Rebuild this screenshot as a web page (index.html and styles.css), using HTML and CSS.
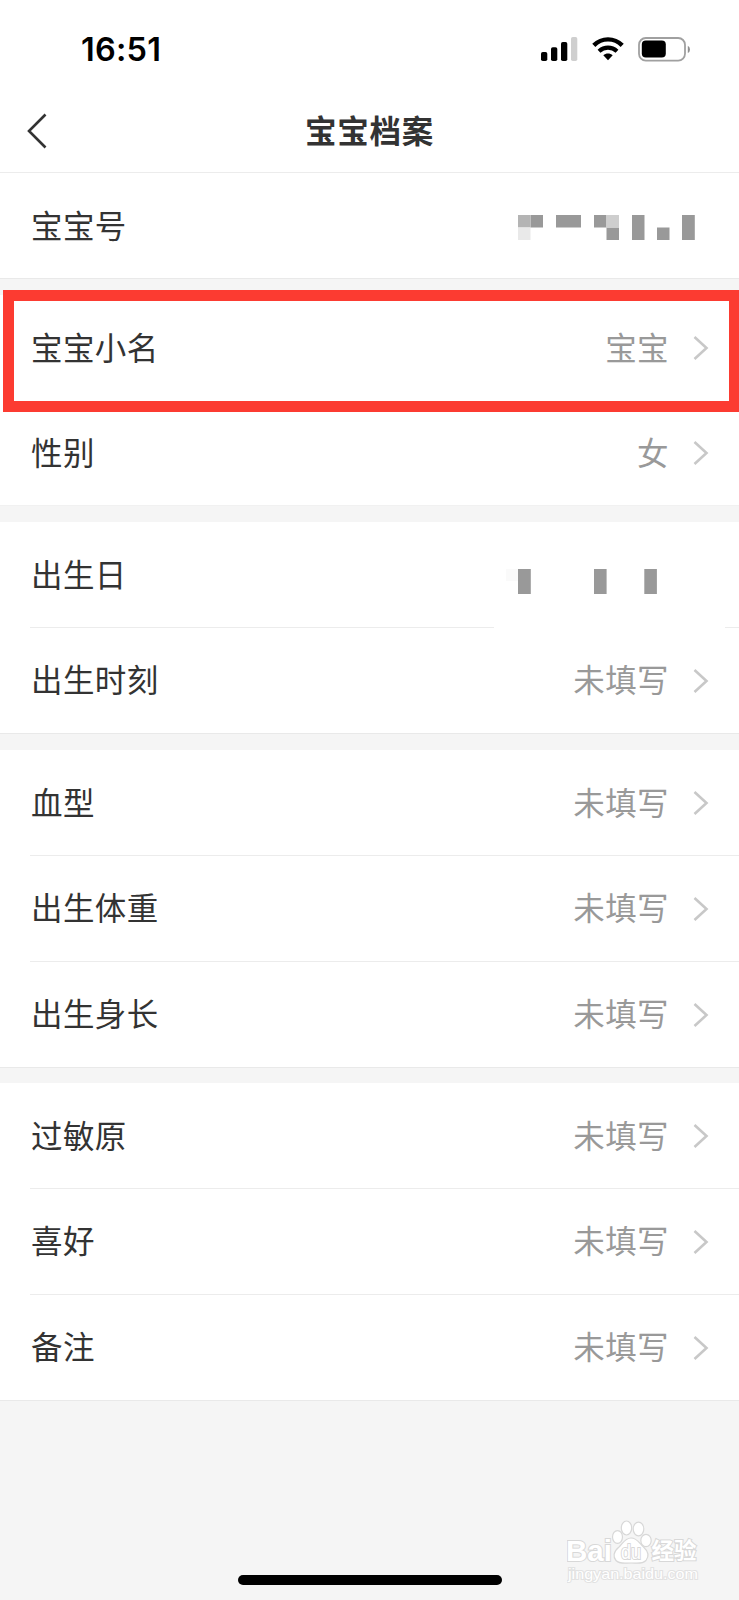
FILE: index.html
```
<!DOCTYPE html>
<html lang="zh-CN">
<head>
<meta charset="utf-8">
<title>宝宝档案</title>
<link rel="stylesheet" href="styles.css">
</head>
<body>
<svg class="defs" width="0" height="0" aria-hidden="true">
  <symbol id="chevron" viewBox="0 0 16 26"><path d="M1.500 2 L13.500 13 L1.500 24" fill="none" stroke="#c8c8c8" stroke-width="2.6"/></symbol>
</svg>
<div class="phone">
  <header class="status">
    <span class="time">16:51</span>
    <div class="status-icons">
      <svg width="37" height="25" viewBox="0 0 37 25">
        <rect x="0" y="15" width="6.3" height="9" rx="1.8"/>
        <rect x="10" y="10.3" width="6.3" height="13.7" rx="1.8"/>
        <rect x="20" y="5" width="6.3" height="19" rx="1.8"/>
        <rect x="30" y="0" width="6.3" height="24" rx="1.8" fill="#cfcfcf"/>
      </svg>
      <svg class="wifi" width="32" height="24" viewBox="0 0 32 24">
        <path d="M1.8 8.4 C9.8 0.4 22.2 0.4 30.2 8.4" fill="none" stroke="#000" stroke-width="4.4"/>
        <path d="M7 14.2 C12.3 9.4 19.7 9.4 25 14.2" fill="none" stroke="#000" stroke-width="4.2"/>
        <path d="M11.3 18.3 C14 15.9 18 15.9 20.7 18.3 L16 23.3 Z"/>
      </svg>
      <svg class="battery" width="53" height="25" viewBox="0 0 53 25">
        <rect x="1" y="1" width="46" height="22.6" rx="6.8" fill="#fff" stroke="#a0a0a0" stroke-width="1.8"/>
        <rect x="3.8" y="3.6" width="24" height="17" rx="4"/>
        <path d="M49.8 8.8 Q52 10 52 12.4 Q52 14.8 49.8 16 Z" fill="#8f8f8f"/>
      </svg>
    </div>
  </header>
  <nav class="nav">
    <svg class="back" width="20" height="36" viewBox="0 0 20 36"><path d="M18.5 1.5 L2 18 L18.5 34.5" fill="none" stroke="#333" stroke-width="2.6"/></svg>
    <h1 class="title">宝宝档案</h1>
  </nav>

  <section class="group g1">
    <div class="row"><span class="label">宝宝号</span>
      <svg class="mosaic-id" width="178" height="25" viewBox="0 0 178 25">
        <g fill="#999"><rect x="12.5" width="12.5" height="12.5"/><rect x="38" width="25" height="12.5"/><rect x="76" width="12.5" height="12.5"/><rect x="88.5" y="12.5" width="12.5" height="12.5"/><rect x="114" width="12.5" height="25"/><rect x="139" y="12.5" width="12.5" height="12.5"/><rect x="164" width="12.8" height="25"/></g>
        <rect width="12.5" height="12.5" fill="#b4b4b4"/><rect y="12.5" width="12.5" height="12.5" fill="#e9e9e9"/><rect x="88.5" width="12.5" height="12.5" fill="#cecece"/>
      </svg>
    </div>
  </section>

  <section class="group g2">
    <div class="row"><span class="label">宝宝小名</span><span class="value">宝宝</span><svg class="chev"><use href="#chevron"/></svg></div>
    <div class="row plain"><span class="label">性别</span><span class="value">女</span><svg class="chev"><use href="#chevron"/></svg></div>
    <div class="highlight"></div>
  </section>

  <section class="group g3">
    <div class="row"><span class="label">出生日</span>
      <svg class="mosaic-date" width="152" height="25" viewBox="0 0 152 25"><rect width="12" height="12" fill="#fafafa"/><g fill="#999"><rect x="12" width="12.8" height="25"/><rect x="88" width="12.6" height="25"/><rect x="138.3" width="12.6" height="25"/></g></svg>
    </div>
    <div class="row masked"><span class="label">出生时刻</span><span class="value">未填写</span><svg class="chev"><use href="#chevron"/></svg></div>
  </section>

  <section class="group g4">
    <div class="row"><span class="label">血型</span><span class="value">未填写</span><svg class="chev"><use href="#chevron"/></svg></div>
    <div class="row"><span class="label">出生体重</span><span class="value">未填写</span><svg class="chev"><use href="#chevron"/></svg></div>
    <div class="row"><span class="label">出生身长</span><span class="value">未填写</span><svg class="chev"><use href="#chevron"/></svg></div>
  </section>

  <section class="group g5">
    <div class="row"><span class="label">过敏原</span><span class="value">未填写</span><svg class="chev"><use href="#chevron"/></svg></div>
    <div class="row"><span class="label">喜好</span><span class="value">未填写</span><svg class="chev"><use href="#chevron"/></svg></div>
    <div class="row"><span class="label">备注</span><span class="value">未填写</span><svg class="chev"><use href="#chevron"/></svg></div>
  </section>

  <footer class="footer">
    <div class="home"></div>
    <svg class="watermark" width="140" height="72" viewBox="0 0 140 72">
      <text class="wm-latin" x="-1" y="46" textLength="46" lengthAdjust="spacingAndGlyphs">Bai</text>
      <g fill="#fff" stroke="#d8d8d8" stroke-width="1.2">
        <ellipse cx="50.5" cy="22" rx="5" ry="6.4"/>
        <ellipse cx="59.5" cy="13" rx="5.2" ry="7"/>
        <ellipse cx="71.5" cy="14" rx="5.3" ry="6.8"/>
        <ellipse cx="79" cy="25.500" rx="5.2" ry="6.2"/>
        <path d="M64 23 C58 23 56 28 52 32 C46 37 46 42 49 45.500 C52.500 49.500 58 48 64 48 C70 48 75 49.500 79 45.500 C82 41.500 82 37 76.500 32 C72 28 70.500 23 64 23 Z"/>
      </g>
      <text class="wm-du" x="54" y="44" textLength="20" lengthAdjust="spacingAndGlyphs">du</text>
      <text class="wm-cjk" x="84.500" y="43.500">经验</text>
      <text class="wm-url" x="1" y="64" textLength="130" lengthAdjust="spacingAndGlyphs">jingyan.baidu.com</text>
    </svg>
  </footer>
</div>
</body>
</html>
```
FILE: styles.css
```
* { box-sizing: border-box; }
body { margin: 0; background: #f5f5f5; font-family: "Noto Sans CJK SC", sans-serif; color: #333; }
.defs { display: block; }
.phone { width: 739px; height: 1600px; display: flex; flex-direction: column; background: #f5f5f5; overflow: hidden; }
.status { height: 90px; background: #fff; display: flex; justify-content: space-between; padding: 0 48px 0 81px; }
.time { font: 600 32.5px/40px Inter, sans-serif; color: #000; letter-spacing: 0.2px; padding-top: 30px; }
.status-icons { display: flex; align-items: flex-start; padding-top: 37px; }
.wifi { margin-left: 14px; }
.battery { margin-left: 14px; }
.nav { height: 83px; background: #fff; border-bottom: 1px solid #ececec; display: grid; grid-template-columns: 120px 1fr 120px; align-items: center; padding-bottom: 1px; }
.back { margin-left: 27px; }
.title { margin: 0; padding-bottom: 4px; text-align: center; font-size: 31.500px; line-height: 46px; font-weight: 700; letter-spacing: 0.7px; color: #333; }
.group { position: relative; background: #fff; display: flex; flex-direction: column; border-bottom: 1px solid #e9e9e9; margin-bottom: 16px; }
.g1 { height: 106px; }
.g2 { height: 211px; border-bottom-color: #f1f1f1; }
.g3 { height: 212px; }
.g4 { height: 318px; margin-bottom: 15px; }
.g5 { height: 318px; margin-bottom: 0; }
.row { flex: 1; display: flex; align-items: center; padding: 0 30px 1px 31px; }
.row + .row { background: linear-gradient(#ececec, #ececec) 30px 0 / 100% 1px no-repeat; }
.g3 .row:first-child, .g4 .row:first-child, .g5 .row:first-child { flex: 0 0 105px; }
.row.plain { background: none; }
.row.masked { background: linear-gradient(#ececec, #ececec) 30px 0 / 464px 1px no-repeat, linear-gradient(#ececec, #ececec) 725px 0 / 14px 1px no-repeat; }
.label, .value { font-size: 31.500px; line-height: 46px; letter-spacing: 0.4px; padding-bottom: 3px; }
.label { flex: 1; }
.value { color: #999; }
.chev { width: 16px; height: 26px; margin: 2px 0 0 24px; }
.mosaic-id { margin: 5px 13px 0 0; }
.mosaic-date { margin: 14px 51px 0 0; }
.highlight { position: absolute; left: 3px; top: -5px; width: 737px; height: 122px; border: 11px solid #fc3b31; }
.footer { flex: 1; position: relative; display: flex; justify-content: center; align-items: flex-end; padding-bottom: 15px; }
.home { width: 264px; height: 10px; border-radius: 5px; background: #000; }
.watermark { position: absolute; left: 567px; top: 114px; }
.watermark text { fill: #fff; stroke: #d8d8d8; stroke-width: 2px; paint-order: stroke; }
.wm-latin { font: 700 29px "Liberation Sans", sans-serif; }
.watermark .wm-du { font: 400 20px "Liberation Sans", sans-serif; fill: #fff; }
.wm-cjk { font: 700 22.500px "Noto Sans CJK SC", sans-serif; }
.watermark .wm-url { font: 400 15px "Liberation Sans", sans-serif; stroke: #e2e2e2; }
```
